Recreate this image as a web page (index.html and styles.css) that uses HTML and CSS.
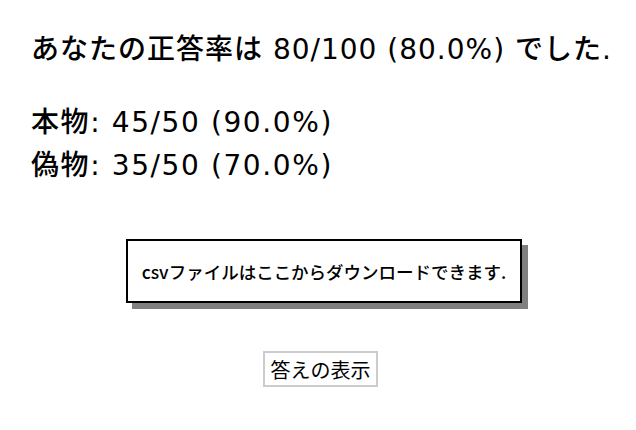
FILE: index.html
```html
<!DOCTYPE html>
<html lang="ja">
<head>
<meta charset="utf-8">
<title>結果</title>
<link rel="stylesheet" href="styles.css">
</head>
<body>
<main class="page">
  <section class="result">
    <p class="score">あなたの正答率は 80/100 (80.0%) でした.</p>
    <div class="stats">
      <p class="stat">本物: 45/50 (90.0%)</p>
      <p class="stat">偽物: 35/50 (70.0%)</p>
    </div>
  </section>
  <div class="download-wrap">
    <a class="download" href="#">csvファイルはここからダウンロードできます.</a>
  </div>
  <div class="answer-wrap">
    <button class="answer" type="button">答えの表示</button>
  </div>
</main>
</body>
</html>
```

FILE: styles.css
```css
html, body {
  margin: 0;
  padding: 0;
  background: #ffffff;
  color: #000000;
}

body {
  font-family: "DejaVu Sans", "Noto Sans CJK JP", sans-serif;
}

.page {
  display: flex;
  flex-direction: column;
}

.result {
  padding-left: 31px;
  font-size: 28px;
  font-weight: 500;
  letter-spacing: 1px;
}

.score {
  margin: 30px 0 0;
  line-height: 40px;
  white-space: nowrap;
}

.stats {
  margin-top: 31px;
}

.stat {
  margin: 0;
  line-height: 43px;
  letter-spacing: 1.6px;
  white-space: nowrap;
}

.download-wrap {
  display: flex;
  justify-content: center;
  padding-left: 12px;
  margin-top: 52px;
}

.download {
  box-sizing: border-box;
  width: 396px;
  height: 64px;
  border: 2px solid #000000;
  background: #ffffff;
  box-shadow: 6px 6px 0 #808080;
  display: flex;
  align-items: center;
  justify-content: center;
  color: #000000;
  text-decoration: none;
  font-family: "Noto Sans CJK JP", sans-serif;
  font-size: 17.5px;
  font-weight: 500;
  white-space: nowrap;
}

.answer-wrap {
  display: flex;
  justify-content: center;
  padding-left: 5px;
  margin-top: 48px;
}

.answer {
  box-sizing: border-box;
  width: 115px;
  height: 36px;
  border: 2px solid #cccccc;
  background: #ffffff;
  color: #000000;
  font-family: "Noto Sans CJK JP", sans-serif;
  font-size: 20px;
  padding: 0;
  cursor: pointer;
}
```
